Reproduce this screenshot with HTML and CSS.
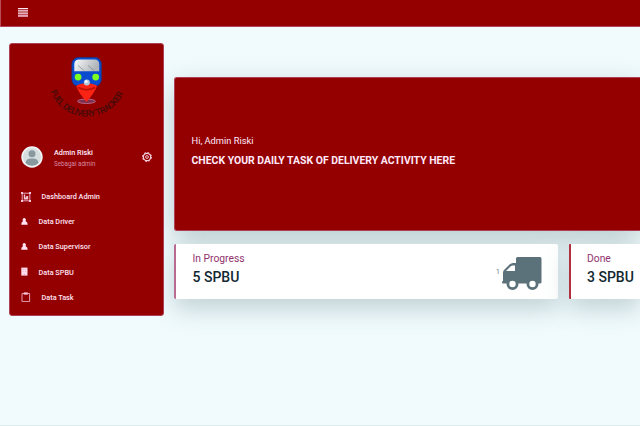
FILE: index.html
```html
<!DOCTYPE html>
<html lang="en">
<head>
<meta charset="utf-8">
<title>Fuel Delivery Tracker</title>
<link rel="stylesheet" href="styles.css">
</head>
<body>
<header class="topbar">
  <svg class="burger" viewBox="0 0 10 9"><path d="M0 .5h10M0 2.8h10M0 5.200h10" stroke="#ffe6f6" stroke-width="1.300"/><path d="M0 7.700h10" stroke="#e6a0b4" stroke-width="2.400"/></svg>
</header>
<div class="layout">
  <aside class="sidebar">
    <svg class="logo" viewBox="0 0 76 68">
      <defs><linearGradient id="glass" x1="0" y1="0" x2="1" y2=".3"><stop offset="0" stop-color="#fafafa"/><stop offset="1" stop-color="#aeb4b8"/></linearGradient></defs>
      <ellipse cx="37.500" cy="48.300" rx="9" ry="2.200" fill="#80304e" stroke="#b56585" stroke-width="1"/>
      <rect x="22.900" y="4.500" width="29.400" height="28.600" rx="6.500" fill="#0b4bd0" stroke="#153780" stroke-width=".8"/>
      <path d="M27.300 33Q29 30.600 37.500 30.200Q46 30.600 48 33Q46 39 37.500 49Q29 39 27.300 33Z" fill="#fb2313"/>
      <path d="M29 34.500Q37.500 39 46 34.500" fill="none" stroke="#bd1009" stroke-width="1.500"/>
      <path d="M30 6.600h15.500q4.500 0 4.700 4.500v7.100H25.300v-7.100q.2-4.500 4.700-4.500Z" fill="url(#glass)"/>
      <path d="M29 12.500l6 5M39 12.500l6 5" stroke="#737b83" stroke-width=".6"/>
      <circle cx="29.100" cy="24.100" r="3.400" fill="#7cff20"/><circle cx="46.700" cy="24.100" r="3.400" fill="#7cff20"/>
      <circle cx="37.800" cy="29.500" r="3" fill="#b4cadd"/><circle cx="37.200" cy="28.600" r="1.300" fill="#fff"/>
      <path id="arc" d="M1.500 38.500A39.500 39.500 0 0 0 75 38.500" fill="none"/>
      <text class="logo-text"><textPath href="#arc" textLength="92" lengthAdjust="spacing">FUEL DELIVERY TRACKER</textPath></text>
    </svg>
    <div class="profile">
      <svg class="avatar" viewBox="0 0 22 22"><circle cx="11" cy="11" r="9.900" fill="#d6dddf" stroke="#f1f4f6" stroke-width="1.600"/><circle cx="11" cy="7.800" r="3.500" fill="#87999f"/><path d="M4.500 17Q5 12.800 9 12.400h4q4 .4 4.500 4.600Q15 19.800 11 19.800T4.500 17Z" fill="#87999f"/></svg>
      <div class="who"><strong>Admin Riski</strong><span>Sebagai admin</span></div>
      <svg class="gear" viewBox="0 0 10 10"><circle cx="5" cy="5" r="3.700" fill="none" stroke="#f5d0e0" stroke-width="1.200"/><circle cx="5" cy="5" r="4.500" fill="none" stroke="#f5d0e0" stroke-width="1" stroke-dasharray="1.767"/><circle cx="5" cy="5" r="1.400" fill="none" stroke="#f5d0e0" stroke-width=".9"/></svg>
    </div>
    <nav class="menu">
      <a class="item wide"><svg viewBox="0 0 10 10"><path d="M1.200 1.200h7.600v7.600H1.200Z" fill="none" stroke="#f0b4cc" stroke-width=".9"/><path d="M0 0h2v2H0ZM8 0h2v2H8ZM0 8h2v2H0ZM8 8h2v2H8ZM2.800 2.600h1.400v2.800h1V4h2v3.600H2.800Z" fill="#f5c5d9"/></svg>Dashboard Admin</a>
      <a class="item"><svg viewBox="0 0 10 10"><path d="M3.200.9Q4.800.9 4.900 2.600L4.700 4.300Q6.700 4.800 6.700 7.800H0.200Q.2 4.800 1.900 4.300L1.600 2.600Q1.600.9 3.200.9Z" fill="#ffe2f1"/></svg>Data Driver</a>
      <a class="item"><svg viewBox="0 0 10 10"><path d="M3.200.9Q4.800.9 4.900 2.600L4.700 4.300Q6.700 4.800 6.700 7.800H0.200Q.2 4.800 1.900 4.300L1.600 2.600Q1.600.9 3.200.9Z" fill="#ffe2f1"/></svg>Data Supervisor</a>
      <a class="item"><svg viewBox="0 0 10 10"><path d="M.3.600h6.200v8H.3Z" fill="#ffddeb"/><path d="M2.700 7.200h1.400v1.400H2.700ZM1.800 2.300h.8v.7h-.8ZM4.200 2.300H5V3h-.8ZM1.800 4.400h.8v.7h-.8ZM4.200 4.400H5v.7h-.8Z" fill="#d792a8"/></svg>Data SPBU</a>
      <a class="item wide"><svg viewBox="0 0 10 10"><path d="M1 1.500h7.600v8.100H1Z" fill="none" stroke="#eeb0c8" stroke-width=".9"/><path d="M2.800.400h4v2.200h-4Z" fill="#f5c5d9"/></svg>Data Task</a>
    </nav>
  </aside>
  <main class="content">
    <section class="hero"><p>Hi, Admin Riski</p><h1>CHECK YOUR DAILY TASK OF DELIVERY ACTIVITY HERE</h1></section>
    <div class="cards">
      <section class="card">
        <div class="stat"><span>In Progress</span><strong>5 SPBU</strong></div>
        <div class="figure"><span>1</span><svg class="truck" viewBox="0 0 40 33"><path d="M14 1.500Q14 0 15.500 0H38q1.500 0 1.500 1.500V25q0 1.500-1.500 1.500H1q-1 0-1-1.200t1-1.300V15.500Q1 14 2 13L7.500 7.500Q9 6 11 6h3Z" fill="#5b727a"/><path d="M4 14l5-5q.7-.6 1.500-.6H13V14Z" fill="#fff"/><circle cx="10.500" cy="27" r="4.600" fill="#fff" stroke="#5b727a" stroke-width="2.800"/><circle cx="30.500" cy="27" r="4.600" fill="#fff" stroke="#5b727a" stroke-width="2.800"/></svg></div>
      </section>
      <section class="card done"><div class="stat"><span>Done</span><strong>3 SPBU</strong></div></section>
    </div>
  </main>
</div>
</body>
</html>
```
FILE: styles.css
```css
* { box-sizing: border-box; }
body { margin: 0; height: 426px; overflow: hidden; background: #f1fbfd; font-family: Roboto, "Liberation Sans", sans-serif; border-bottom: 1px solid #dceeed; }
svg { display: block; flex: none; }
p, h1 { margin: 0; }
.topbar { height: 27px; background: #940000; border-left: 1px solid #b94d5b; border-bottom: 1px solid #b04458; padding: 8px 0 0 17px; }
.burger { width: 10px; height: 9px; }
.layout { display: flex; align-items: flex-start; gap: 10px; padding: 16px 0 0 9px; }
.sidebar { width: 155px; height: 273px; flex: none; background: #940000; border: 1px solid #ad4052; border-radius: 3px; position: relative; z-index: 1; }
.logo { width: 76px; height: 68px; margin: 9px 0 0 38.500px; overflow: visible; }
.logo-text { font-size: 8.700px; font-weight: 500; fill: #430b0b; }
.profile { display: flex; align-items: center; height: 24px; margin-top: 24px; padding: 0 11px 0 11px; }
.avatar { width: 22px; height: 22px; }
.who { display: flex; flex-direction: column; gap: 3px; margin: 1px 0 0 11px; flex: 1; }
.who strong { font-size: 7.300px; line-height: 9px; font-weight: 500; color: #ffe9fa; }
.who span { font-size: 6.300px; line-height: 8px; color: #d889a0; }
.gear { width: 10px; height: 10px; }
.menu { display: flex; flex-direction: column; margin-top: 15px; padding-left: 11px; }
.item { display: flex; align-items: center; gap: 7.500px; height: 25.200px; font-size: 7.300px; font-weight: 500; color: #ffe2f3; }
.item svg { width: 10px; height: 10px; }
.item.wide { gap: 10.500px; }
.content { flex: 1; min-width: 0; padding-top: 34px; }
.hero { height: 154px; padding: 55.500px 0 0 16.500px; background: #940000; border: 1px solid #ad4052; border-right: 0; border-radius: 3px 0 0 3px; color: #ffe9fa; box-shadow: 0 10px 28px rgba(70, 105, 110, .32); }
.hero p { font-size: 9.300px; line-height: 13px; }
.hero h1 { margin-top: 7.500px; font-size: 10.440px; line-height: 14px; font-weight: 700; }
.cards { display: flex; gap: 11px; margin-top: 13px; }
.card { width: 384px; height: 55px; flex: none; display: flex; justify-content: space-between; background: #fff; border-left: 2px solid #b96a91; border-radius: 2px; padding: 6px 16px 0 16.500px; box-shadow: 0 10px 24px rgba(70, 105, 110, .28); }
.card.done { width: auto; flex: 1; border-left: 2px solid #b0303f; border-radius: 1px 0 0 1px; padding: 6px 0 0 16px; }
.stat { display: flex; flex-direction: column; }
.stat span { font-size: 10.300px; line-height: 15px; margin-top: .6px; color: #91336d; }
.stat strong { margin-top: 3.400px; font-size: 14px; line-height: 17px; font-weight: 500; color: #122831; }
.figure { display: flex; gap: 2px; padding-top: 6.500px; }
.figure span { font-size: 7.500px; line-height: 8px; margin-top: 11px; color: #71868d; }
.truck { width: 40px; height: 33px; }
```
